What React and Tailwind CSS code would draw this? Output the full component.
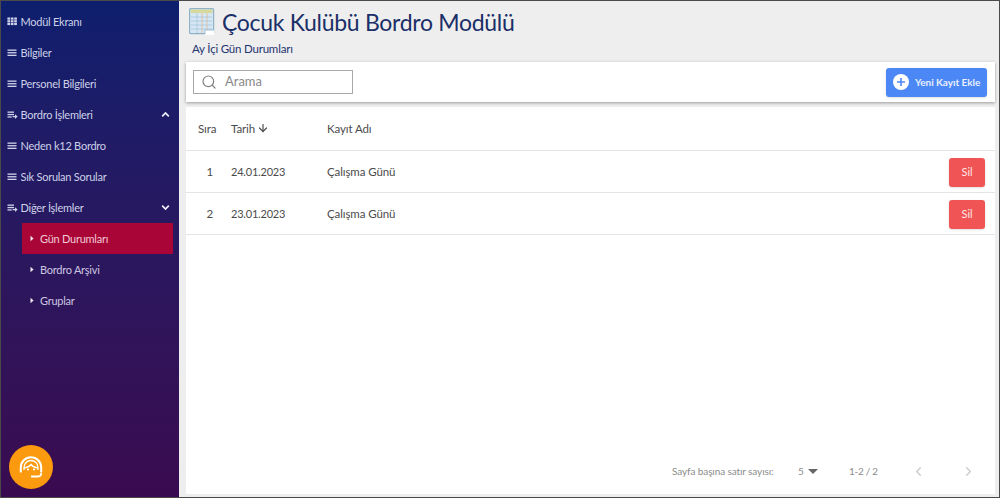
import React from "react";
import { Search, ArrowDown, ChevronLeft, ChevronRight } from "lucide-react";

function GridIcon() {
  return (
    <svg width="11" height="11" viewBox="0 0 11 11" className="shrink-0" fill="#cfd3ea">
      {[0, 3.4, 6.8].map((x) => [1.5, 4.2, 6.9].map((y) => <rect key={`${x}-${y}`} x={x + 0.4} y={y} width="2.7" height="2.2" />))}
    </svg>
  );
}
function ListIcon() {
  return (
    <svg width="11" height="11" viewBox="0 0 11 11" className="shrink-0" fill="#cfd3ea">
      <rect x="0.5" y="2.5" width="9" height="1.3" />
      <rect x="0.5" y="5.1" width="9" height="1.3" />
      <rect x="0.5" y="7.7" width="9" height="1.3" />
    </svg>
  );
}
function PlaylistIcon() {
  return (
    <svg width="11" height="11" viewBox="0 0 11 11" className="shrink-0" fill="#cfd3ea">
      <rect x="0.5" y="2.5" width="6.5" height="1.3" />
      <rect x="0.5" y="4.9" width="6.5" height="1.3" />
      <rect x="0.5" y="7.3" width="4.2" height="1.3" />
      <path d="M5.6 6.9h2.4V5.3l2.6 2.3-2.6 2.3V8.3H5.6z" />
    </svg>
  );
}
function Chevron({ up }) {
  return (
    <svg width="9" height="7" viewBox="0 0 9 7" className="shrink-0" fill="none" stroke="#eef0fa" strokeWidth="1.7">
      <path d={up ? "M1.2 5.3 4.5 2l3.3 3.3" : "M1.2 1.7 4.5 5l3.3-3.3"} />
    </svg>
  );
}
function Caret() {
  return (
    <svg width="4" height="7" viewBox="0 0 4 7" className="shrink-0" fill="#f3e9f2">
      <path d="M0.5 0.8 3.6 3.5 0.5 6.2z" />
    </svg>
  );
}

function Item({ icon, label, right }) {
  return (
    <div className="flex h-[31px] items-center pl-[6px] pr-[9px] text-[11px] tracking-[-0.25px] text-[#cdd1e8]">
      {icon}
      <span className="ml-[2.5px] mt-[1px] flex-1">{label}</span>
      {right}
    </div>
  );
}
function SubItem({ label, active }) {
  return (
    <div className={`ml-[21px] mr-[6px] flex h-[31px] items-center pl-[8px] text-[11px] tracking-[-0.25px] ${active ? "bg-[#a90537] text-[#f2c9d6]" : "text-[#cdc5e0]"}`}>
      <Caret />
      <span className="ml-[6px] mt-[1px]">{label}</span>
    </div>
  );
}

function HeadsetLogo() {
  return (
    <svg width="28" height="28" viewBox="0 0 28 28" fill="none" stroke="#fff">
      <path d="M3.800 19.500V14.500a10.200 10.200 0 0 1 20.400 0v5" strokeWidth="2" />
      <path d="M7 17v-2.500a7 7 0 0 1 14 0V17" strokeWidth="1.300" />
      <path d="M7.200 14.800c3-.1 5.300-1.300 6.800-3.300 1.500 2 3.800 3.200 6.800 3.300" strokeWidth="1.300" />
      <path d="M24.200 20c0 2.300-1.300 3.500-3.300 3.500H14" strokeWidth="1.800" />
      <circle cx="11" cy="16.500" r="1.100" fill="#fff" stroke="none" />
      <circle cx="17" cy="16.500" r="1.100" fill="#fff" stroke="none" />
    </svg>
  );
}

function TableIcon() {
  return (
    <svg width="26" height="28" viewBox="0 0 26 28" className="shrink-0">
      <rect x="0.600" y="0.600" width="24" height="25" rx="1" fill="#d6e6f3" stroke="#8fb2c6" strokeWidth="1.200" />
      <rect x="1.500" y="1.500" width="22" height="3.500" fill="#d5da9c" />
      <g stroke="#e9b88a" strokeWidth="0.800">
        <path d="M13 5v20M18 5v20" />
      </g>
      <path d="M8 5v20" stroke="#a6c6dc" strokeWidth="0.800" />
      <g stroke="#a6c6dc" strokeWidth="0.800">
        <path d="M2 9h21M2 13h21M2 17h21M2 21h21" />
      </g>
      <path d="M16 27v-5h9v5z" fill="#ffffff" />
      <path d="M16 26v-4h9" fill="none" stroke="#8fb2c6" strokeWidth="0.800" />
    </svg>
  );
}

function Row({ n, date }) {
  return (
    <div className="flex h-[42px] items-center border-b border-[#e4e4e4] pl-[6px] pr-[10px] text-[11.5px] tracking-[-0.1px] text-[#4b4b4b]">
      <span className="w-[33px] pr-[12px] text-right">{n}</span>
      <span className="mt-[1px] w-[102px] pl-[6px] text-[11px] tracking-[-0.2px]">{date}</span>
      <span className="flex-1">Çalışma Günü</span>
      <button className="mt-[1px] flex h-[29px] w-[36px] items-center justify-center rounded-[3px] bg-[#f05454] text-[11px] text-[#fde7e7] shadow-sm">Sil</button>
    </div>
  );
}

export default function App() {
  return (
    <div className="flex h-[498px] w-[1000px] overflow-hidden border border-[#4a4a4a] bg-[#eeeeee] font-['Lato','Noto_Sans',sans-serif]">
      <aside className="relative flex w-[178px] shrink-0 flex-col bg-gradient-to-b from-[#0d1f6e] to-[#3a0a50] pt-[5px]">
        <Item icon={<GridIcon />} label="Modül Ekranı" />
        <Item icon={<ListIcon />} label="Bilgiler" />
        <Item icon={<ListIcon />} label="Personel Bilgileri" />
        <Item icon={<PlaylistIcon />} label="Bordro İşlemleri" right={<Chevron up />} />
        <Item icon={<ListIcon />} label="Neden k12 Bordro" />
        <Item icon={<ListIcon />} label="Sık Sorulan Sorular" />
        <Item icon={<PlaylistIcon />} label="Diğer İşlemler" right={<Chevron />} />
        <SubItem label="Gün Durumları" active />
        <SubItem label="Bordro Arşivi" />
        <SubItem label="Gruplar" />
        <div className="absolute bottom-[8px] left-[8px] flex h-[44px] w-[44px] items-center justify-center rounded-full bg-[#fb9a0e]">
          <HeadsetLogo />
        </div>
      </aside>
      <main className="flex min-w-0 flex-1 flex-col pl-[7px] pr-[4px] pb-[3px]">
        <header className="h-[61px] shrink-0 pt-[7px]">
          <div className="flex h-[28px] items-center pl-[3px]">
            <TableIcon />
            <h1 className="ml-[7px] text-[23px] leading-[28px] tracking-[-0.3px] text-[#1b2f68]">Çocuk Kulübü Bordro Modülü</h1>
          </div>
          <p className="mt-[5px] pl-[6px] text-[11.5px] leading-[15px] tracking-[-0.2px] text-[#1f3570]">Ay İçi Gün Durumları</p>
        </header>
        <div className="flex h-[40px] shrink-0 items-center justify-between bg-white pl-[7px] pr-[8px] shadow-[0_1px_3px_rgba(0,0,0,0.35)]">
          <div className="flex h-[24px] w-[160px] items-center border border-[#a8a8a8] pl-[7px]">
            <Search size={16} strokeWidth={1.800} className="text-[#808080]" />
            <span className="ml-[8px] text-[13px] text-[#8a8a8a]">Arama</span>
          </div>
          <button className="flex h-[29px] w-[101px] items-center rounded-[3px] bg-[#4b87f5] pl-[7px] text-[10px] font-bold tracking-[-0.05px] text-[#e8f0ff] shadow-sm">
            <span className="flex h-[16px] w-[16px] items-center justify-center rounded-full bg-white">
              <svg width="10" height="10" viewBox="0 0 10 10" stroke="#4b87f5" strokeWidth="1.600"><path d="M5 1v8M1 5h8" /></svg>
            </span>
            <span className="ml-[6px]">Yeni Kayıt Ekle</span>
          </button>
        </div>
        <section className="mt-[5px] flex min-h-0 flex-1 flex-col bg-white">
          <div className="flex h-[44px] shrink-0 items-center border-b border-[#e4e4e4] pl-[6px] text-[11.5px] tracking-[-0.1px] text-[#4b4b4b]">
            <span className="w-[33px] pl-[6px]">Sıra</span>
            <span className="flex w-[102px] items-center pl-[6px]">Tarih<ArrowDown size={12} strokeWidth={2.500} className="ml-[2px] mb-[2px] text-[#555]" /></span>
            <span>Kayıt Adı</span>
          </div>
          <Row n="1" date="24.01.2023" />
          <Row n="2" date="23.01.2023" />
          <div className="mt-auto flex h-[46px] items-center text-[10px] tracking-[-0.1px] text-[#8c8c8c]">
            <span className="ml-[486px] w-[126px] whitespace-nowrap">Sayfa başına satır sayısı:</span>
            <span className="w-[10px]">5</span>
            <svg width="10" height="5" viewBox="0 0 10 5" fill="#666"><path d="M0 0h10L5 5z" /></svg>
            <span className="ml-[31px] w-[28px] whitespace-nowrap tracking-[-0.3px]">1-2 / 2</span>
            <ChevronLeft size={15} strokeWidth={2} className="ml-[34px] text-[#c9c9c9]" />
            <ChevronRight size={15} strokeWidth={2} className="ml-[35px] text-[#c9c9c9]" />
          </div>
        </section>
      </main>
    </div>
  );
}
